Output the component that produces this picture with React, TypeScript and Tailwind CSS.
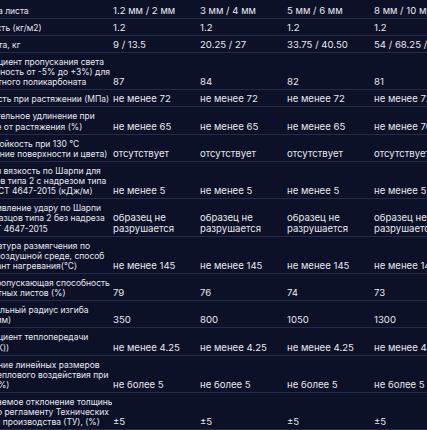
import React from 'react';

type Row = { label: string; values: string[] };

const rows: Row[] = [
  { label: 'Толщина листа', values: ['1.2 мм / 2 мм', '3 мм / 4 мм', '5 мм / 6 мм', '8 мм / 10 мм / 12 мм'] },
  { label: 'Плотность (кг/м2)', values: ['1.2', '1.2', '1.2', '1.2'] },
  { label: 'Вес листа, кг', values: ['9 / 13.5', '20.25 / 27', '33.75 / 40.50', '54 / 68.25 / 81'] },
  {
    label: 'Коэффициент пропускания света\n(погрешность от -5% до +3%) для\nмонолитного поликарбоната',
    values: ['87', '84', '82', '81'],
  },
  { label: 'Прочность при растяжении (МПа)', values: ['не менее 72', 'не менее 72', 'не менее 72', 'не менее 72'] },
  {
    label: 'Относительное удлинение при\nразрыве от растяжения (%)',
    values: ['не менее 65', 'не менее 65', 'не менее 65', 'не менее 70'],
  },
  {
    label: 'Теплостойкость при 130 °С\n(изменение поверхности и цвета)',
    values: ['отсутствует', 'отсутствует', 'отсутствует', 'отсутствует'],
  },
  {
    label: 'Ударная вязкость по Шарпи для\nобразцов типа 2 с надрезом типа\nА по ГОСТ 4647-2015 (кДж/м)',
    values: ['не менее 5', 'не менее 5', 'не менее 5', 'не менее 5'],
  },
  {
    label: 'Сопротивление удару по Шарпи\nдля образцов типа 2 без надреза\nпо ГОСТ 4647-2015',
    values: ['образец не\nразрушается', 'образец не\nразрушается', 'образец не\nразрушается', 'образец не\nразрушается'],
  },
  {
    label: 'Температура размягчения по\nВика в воздушной среде, способ\nА, вариант нагревания(°С)',
    values: ['не менее 145', 'не менее 145', 'не менее 145', 'не менее 145'],
  },
  {
    label: 'Светопропускающая способность\nмонолитных листов (%)',
    values: ['79', '76', '74', '73'],
  },
  { label: 'Минимальный радиус изгиба\nлиста (мм)', values: ['350', '800', '1050', '1300'] },
  {
    label: 'Коэффициент теплопередачи\n(Вт/(м²·К))',
    values: ['не менее 4.25', 'не менее 4.25', 'не менее 4.25', 'не менее 4.25'],
  },
  {
    label: 'Изменение линейных размеров\nпосле теплового воздействия при\n130 °С (%)',
    values: ['не более 5', 'не более 5', 'не более 5', 'не более 5'],
  },
  {
    label: 'Допускаемое отклонение толщины\nлиста по регламенту Технических\nусловий производства (ТУ), (%)',
    values: ['±5', '±5', '±5', '±5'],
  },
];

export default function App() {
  return (
    <div className="w-[427px] h-[430px] overflow-hidden bg-[#0d1128] pt-[2px] text-[#e6e8f0] leading-[10.2px] font-['Inter',sans-serif]">
      {/* таблица прокручена вправо: левый край колонки характеристик скрыт */}
      <div className="ml-[-34px] w-[580px]">
        {rows.map((row, i) => (
          <div
            key={i}
            className="grid grid-cols-[146px_87px_87px_87px_87px] items-end border-b border-[#262c47] pt-[4px] pb-[1.8px]"
          >
            <div className="whitespace-pre overflow-hidden text-[8.5px]">{row.label}</div>
            {row.values.map((v, j) => (
              <div key={j} className="whitespace-pre pl-[1px] text-[9.6px]">
                {v}
              </div>
            ))}
          </div>
        ))}
      </div>
    </div>
  );
}
